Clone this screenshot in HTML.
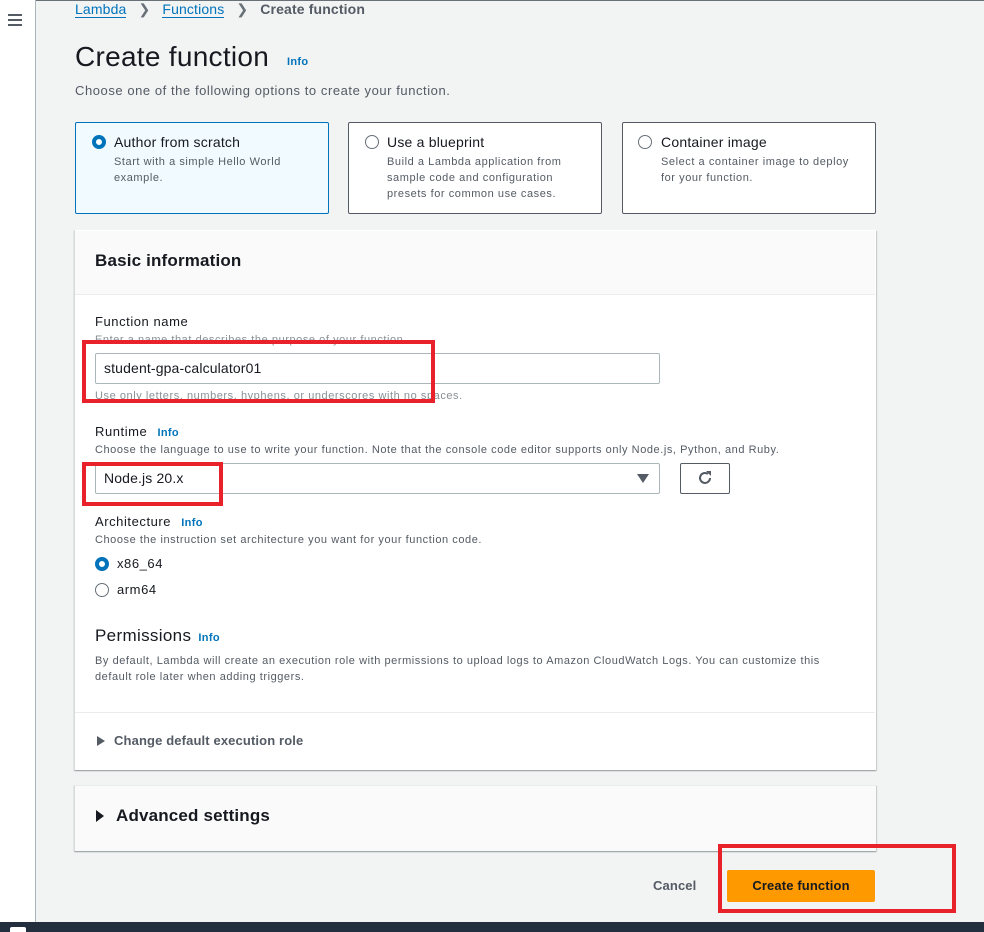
<!DOCTYPE html>
<html><head><meta charset="utf-8"><style>
*{box-sizing:border-box;margin:0;padding:0}
body{width:984px;height:932px;overflow:hidden;background:#f2f3f3;font-family:"Liberation Sans",sans-serif;color:#16191f;position:relative;letter-spacing:.035em}
.a{position:absolute;white-space:nowrap}
.side{left:0;top:0;width:36px;height:922px;background:#fff;border-right:1px solid #aab7b8}
.info{color:#0073bb;font-weight:bold;font-size:11px;letter-spacing:.03em}
.s{font-size:11px;color:#545b64}
.card{top:122px;width:254px;height:92px;background:#fff;border:1px solid #545b64;border-radius:2px}
.radio{width:14px;height:14px;border-radius:50%;border:1.5px solid #687078;background:#fff}
.radio.on{border:4px solid #0073bb}
.red{border:4px solid #e8212b}
</style></head><body>
<div class="a" style="left:0;top:0;width:984px;height:1px;background:#687078"></div>
<div class="a side"></div>
<div class="a" style="left:8px;top:14px;width:14px;height:2px;background:#545b64;box-shadow:0 5px 0 #545b64,0 10px 0 #545b64"></div>
<div class="a" style="left:75px;top:1px;font-size:14px;color:#0073bb;letter-spacing:.01em"><span style="border-bottom:1px solid #0073bb">Lambda</span> <span style="color:#687078;margin:0 8px">&#x276F;</span> <span style="border-bottom:1px solid #0073bb">Functions</span> <span style="color:#687078;margin:0 8px">&#x276F;</span> <span style="color:#545b64;font-weight:bold">Create function</span></div>
<div class="a" style="left:75px;top:41px;font-size:28px;letter-spacing:.01em">Create function</div>
<div class="a info" style="left:287px;top:56px">Info</div>
<div class="a" style="left:75px;top:83px;font-size:13px;color:#545b64">Choose one of the following options to create your function.</div>

<div class="a card" style="left:75px;background:#f1faff;border-color:#0073bb"></div>
<div class="a radio on" style="left:92px;top:135px"></div>
<div class="a" style="left:114px;top:134px;font-size:14px;letter-spacing:.015em">Author from scratch</div>
<div class="a s" style="left:114px;top:154px;line-height:16px">Start with a simple Hello World<br>example.</div>
<div class="a card" style="left:348px"></div>
<div class="a radio" style="left:365px;top:135px"></div>
<div class="a" style="left:387px;top:134px;font-size:14px;letter-spacing:.015em">Use a blueprint</div>
<div class="a s" style="left:387px;top:154px;line-height:16px">Build a Lambda application from<br>sample code and configuration<br>presets for common use cases.</div>
<div class="a card" style="left:622px"></div>
<div class="a radio" style="left:638px;top:135px"></div>
<div class="a" style="left:661px;top:134px;font-size:14px;letter-spacing:.015em">Container image</div>
<div class="a s" style="left:661px;top:154px;line-height:16px">Select a container image to deploy<br>for your function.</div>

<div class="a" style="left:74px;top:230px;width:802px;height:540px;background:#fff;border-left:1px solid #d5dbdb;box-shadow:0 1px 1px rgba(0,28,36,.3),1px 1px 1px rgba(0,28,36,.15)"></div>
<div class="a" style="left:75px;top:231px;width:800px;height:64px;background:#fafafa;border-bottom:1px solid #eaeded"></div>
<div class="a" style="left:95px;top:251px;font-size:17px;font-weight:bold;letter-spacing:.01em">Basic information</div>

<div class="a" style="left:95px;top:314px;font-size:13px">Function name</div>
<div class="a s" style="left:95px;top:334px;color:#879196">Enter a name that describes the purpose of your function.</div>
<div class="a" style="left:95px;top:353px;width:565px;height:31px;border:1px solid #aab7b8;border-radius:2px;background:#fff"></div>
<div class="a" style="left:104px;top:360px;font-size:14px;letter-spacing:.01em">student-gpa-calculator01</div>
<div class="a s" style="left:95px;top:390px;color:#879196">Use only letters, numbers, hyphens, or underscores with no spaces.</div>

<div class="a" style="left:95px;top:424px;font-size:13px">Runtime <span class="info" style="margin-left:6px">Info</span></div>
<div class="a s" style="left:95px;top:444px">Choose the language to use to write your function. Note that the console code editor supports only Node.js, Python, and Ruby.</div>
<div class="a" style="left:95px;top:463px;width:565px;height:31px;border:1px solid #aab7b8;border-radius:2px;background:#fff"></div>
<div class="a" style="left:104px;top:470px;font-size:14px;letter-spacing:.01em">Node.js 20.x</div>
<div class="a" style="left:637px;top:474px;width:0;height:0;border-left:6px solid transparent;border-right:6px solid transparent;border-top:9px solid #545b64"></div>
<div class="a" style="left:680px;top:463px;width:50px;height:31px;border:1px solid #545b64;border-radius:2px;background:#fff"></div>
<svg class="a" style="left:696px;top:469px" width="18" height="18" viewBox="0 0 18 18"><path d="M14 9a5 5 0 1 1-2-4" fill="none" stroke="#545b64" stroke-width="2"/><path d="M10 2h5v5z" fill="#545b64"/></svg>

<div class="a" style="left:95px;top:514px;font-size:13px">Architecture <span class="info" style="margin-left:6px">Info</span></div>
<div class="a s" style="left:95px;top:534px">Choose the instruction set architecture you want for your function code.</div>
<div class="a radio on" style="left:95px;top:557px"></div>
<div class="a" style="left:117px;top:556px;font-size:13px">x86_64</div>
<div class="a radio" style="left:95px;top:583px"></div>
<div class="a" style="left:117px;top:582px;font-size:13px">arm64</div>

<div class="a" style="left:95px;top:626px;font-size:17px;letter-spacing:.02em">Permissions <span class="info" style="margin-left:2px">Info</span></div>
<div class="a s" style="left:95px;top:653px;line-height:16px">By default, Lambda will create an execution role with permissions to upload logs to Amazon CloudWatch Logs. You can customize this<br>default role later when adding triggers.</div>
<div class="a" style="left:75px;top:712px;width:800px;height:1px;background:#eaeded"></div>
<div class="a" style="left:97px;top:736px;width:0;height:0;border-top:5px solid transparent;border-bottom:5px solid transparent;border-left:8px solid #545b64"></div>
<div class="a" style="left:114px;top:733px;font-size:13px;font-weight:bold;color:#545b64;letter-spacing:.01em">Change default execution role</div>

<div class="a" style="left:74px;top:785px;width:802px;height:66px;background:#fafafa;border-left:1px solid #d5dbdb;border-top:1px solid #eaeded;box-shadow:0 1px 1px rgba(0,28,36,.3),1px 1px 1px rgba(0,28,36,.15)"></div>
<div class="a" style="left:96px;top:810px;width:0;height:0;border-top:6px solid transparent;border-bottom:6px solid transparent;border-left:8px solid #16191f"></div>
<div class="a" style="left:116px;top:806px;font-size:17px;font-weight:bold;letter-spacing:.01em">Advanced settings</div>

<div class="a" style="left:653px;top:878px;font-size:13px;font-weight:bold;color:#545b64;letter-spacing:.01em">Cancel</div>
<div class="a" style="left:727px;top:870px;width:148px;height:32px;background:#ff9900;border-radius:2px"></div>
<div class="a" style="left:727px;top:878px;width:148px;text-align:center;font-size:13px;font-weight:bold;letter-spacing:.01em">Create function</div>

<div class="a red" style="left:82px;top:340px;width:353px;height:63px"></div>
<div class="a red" style="left:82px;top:462px;width:141px;height:44px"></div>
<div class="a red" style="left:718px;top:844px;width:238px;height:69px"></div>

<div class="a" style="left:0;top:922px;width:984px;height:10px;background:#232f3e"></div>
<div class="a" style="left:10px;top:927px;width:16px;height:5px;background:#fff;border-radius:2px 2px 0 0"></div>
</body></html>
